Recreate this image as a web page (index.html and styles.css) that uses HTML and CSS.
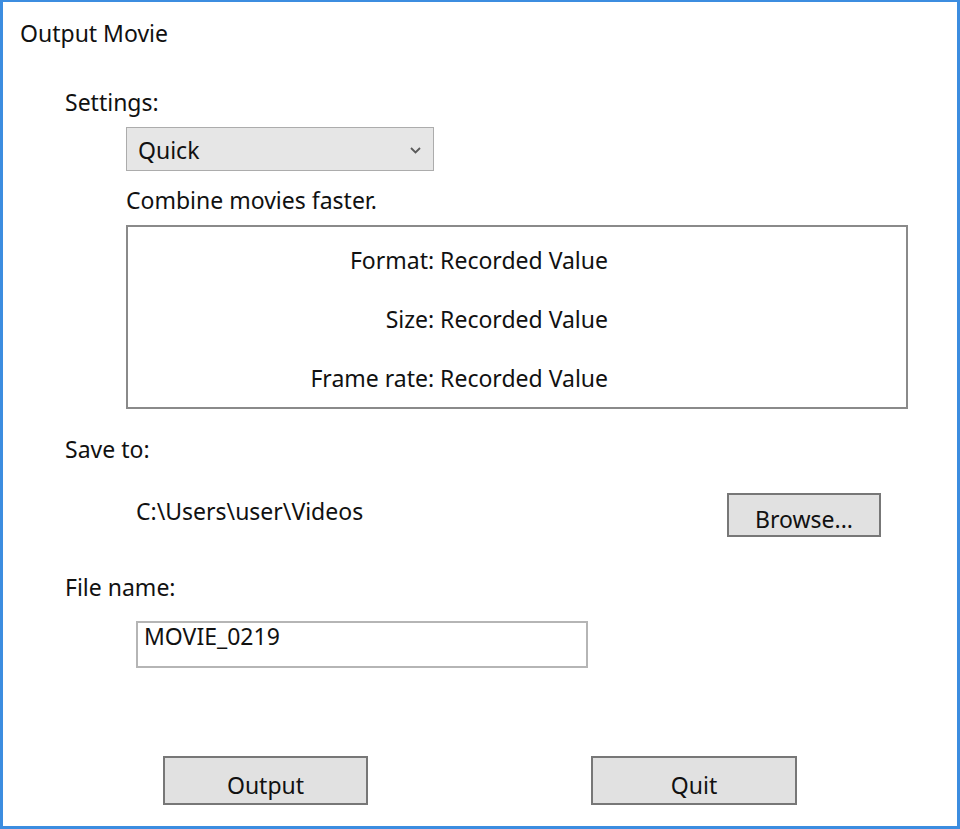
FILE: index.html
```html
<!DOCTYPE html>
<html lang="en">
<head>
<meta charset="utf-8">
<title>Output Movie</title>
<link rel="stylesheet" href="styles.css">
</head>
<body>
<div class="window">
  <div class="title">Output Movie</div>

  <div class="label label-settings">Settings:</div>
  <div class="dropdown">
    <span class="dropdown-text">Quick</span>
    <svg class="chevron" width="11" height="7" viewBox="0 0 11 7" aria-hidden="true">
      <path d="M1 1 L5.5 5.5 L10 1" fill="none" stroke="#5a5a5a" stroke-width="1.8"/>
    </svg>
  </div>
  <div class="desc">Combine movies faster.</div>
  <div class="info">
    <div class="info-lines">
      <div class="info-row">Format: Recorded Value</div>
      <div class="info-row">Size: Recorded Value</div>
      <div class="info-row">Frame rate: Recorded Value</div>
    </div>
  </div>

  <div class="label label-save">Save to:</div>
  <div class="path-row">
    <span class="path">C:\Users\user\Videos</span>
    <button class="btn btn-browse" type="button">Browse...</button>
  </div>

  <div class="label label-file">File name:</div>
  <div class="textbox">MOVIE_0219</div>

  <div class="actions">
    <button class="btn btn-action" type="button">Output</button>
    <button class="btn btn-action btn-quit" type="button">Quit</button>
  </div>
</div>
</body>
</html>
```

FILE: styles.css
```css
html, body {
  margin: 0;
  padding: 0;
  background: #ffffff;
}

body {
  font-family: "Noto Sans", "Open Sans", "DejaVu Sans", sans-serif;
  font-size: 23px;
  line-height: 30px;
  color: #111111;
}

.window {
  box-sizing: border-box;
  width: 960px;
  height: 829px;
  border-style: solid;
  border-color: #3c8de0;
  border-width: 2px 3px 3px 3px;
  padding: 16px 0 0 17px;
  background: #ffffff;
  overflow: hidden;
}

.title {
  height: 30px;
}

.label {
  margin-left: 45px;
  height: 30px;
}

.label-settings {
  margin-top: 39px;
}

.dropdown {
  box-sizing: border-box;
  margin-top: 10px;
  margin-left: 106px;
  width: 308px;
  height: 44px;
  border: 1px solid #acacac;
  background: #e6e6e6;
  display: flex;
  align-items: flex-start;
  justify-content: space-between;
  padding: 7px 12px 0 11px;
}

.dropdown-text {
  display: block;
  height: 30px;
}

.chevron {
  margin-top: 12px;
}

.desc {
  margin-top: 14px;
  margin-left: 106px;
  height: 30px;
}

.info {
  box-sizing: border-box;
  margin-top: 10px;
  margin-left: 106px;
  width: 782px;
  height: 184px;
  border: 2px solid #8a8a8a;
  padding-top: 18px;
}

.info-lines {
  width: 480px;
  text-align: right;
  display: flex;
  flex-direction: column;
  gap: 29px;
}

.info-row {
  height: 30px;
}

.label-save {
  margin-top: 25px;
}

.path-row {
  margin-top: 29px;
  margin-left: 116px;
  width: 745px;
  height: 44px;
  display: flex;
  align-items: flex-start;
}

.path {
  margin-top: 3px;
  height: 30px;
}

.btn {
  box-sizing: border-box;
  font-family: inherit;
  font-size: 23px;
  line-height: 30px;
  color: #111111;
  background: #e1e1e1;
  border: 2px solid #777777;
  border-radius: 0;
  margin: 0;
  text-align: center;
}

.btn-browse {
  margin-left: auto;
  width: 154px;
  height: 44px;
  padding: 8px 0 0 0;
  display: block;
}

.label-file {
  margin-top: 35px;
}

.textbox {
  box-sizing: border-box;
  margin-top: 19px;
  margin-left: 116px;
  width: 452px;
  height: 47px;
  border: 2px solid #b5b5b5;
  padding: 0 6px;
  line-height: 26px;
}

.actions {
  margin-top: 88px;
  margin-left: 143px;
  display: flex;
  gap: 223px;
}

.btn-action {
  width: 205px;
  height: 49px;
  padding: 9px 0 0 0;
  display: block;
}

.btn-quit {
  width: 206px;
}
```
